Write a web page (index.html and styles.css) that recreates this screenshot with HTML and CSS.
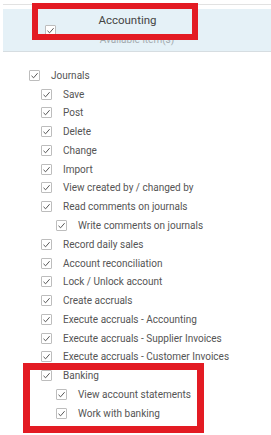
FILE: index.html
```html
<!DOCTYPE html>
<html lang="en">
<head>
    <meta charset="UTF-8">
    <meta name="viewport" content="width=device-width, initial-scale=1.0">
    <title>Rights - Accounting</title>
    <link rel="stylesheet" href="styles.css">
</head>
<body>
    <div class="top-line"></div>

    <!-- Module header -->
    <div class="panel">
        <div class="panel-title">Accounting</div>
        <div class="panel-row">
            <span class="cb checked"><svg viewBox="0 0 9 9"><polyline points="1.5,4.8 3.6,6.8 7.6,2.2"/></svg></span>
        </div>
        <div class="panel-sub">Available item(s)</div>
    </div>

    <!-- Rights tree -->
    <ul class="tree" id="tree"></ul>

    <!-- Annotation boxes -->
    <div class="mark mark-top"></div>
    <div class="mark mark-bottom"></div>

    <script>
        const rights = [
            [0, 'Journals'],
            [1, 'Save'],
            [1, 'Post'],
            [1, 'Delete'],
            [1, 'Change'],
            [1, 'Import'],
            [1, 'View created by / changed by'],
            [1, 'Read comments on journals'],
            [2, 'Write comments on journals'],
            [1, 'Record daily sales'],
            [1, 'Account reconciliation'],
            [1, 'Lock / Unlock account'],
            [1, 'Create accruals'],
            [1, 'Execute accruals - Accounting'],
            [1, 'Execute accruals - Supplier Invoices'],
            [1, 'Execute accruals - Customer Invoices'],
            [1, 'Banking'],
            [2, 'View account statements'],
            [2, 'Work with banking']
        ];

        const tree = document.getElementById('tree');
        rights.forEach(([level, label]) => {
            const li = document.createElement('li');
            li.className = 'row level-' + level;
            li.innerHTML =
                '<span class="cb checked"><svg viewBox="0 0 9 9"><polyline points="1.5,4.8 3.6,6.8 7.6,2.2"/></svg></span>' +
                '<span class="label"></span>';
            li.querySelector('.label').textContent = label;
            tree.appendChild(li);
        });
    </script>
</body>
</html>
```

FILE: styles.css
```css
body {
    font-family: Roboto, "Liberation Sans", Arial, sans-serif;
    margin: 0;
    color: #444;
    background: #fff;
    position: relative;
    width: 271px;
    height: 435px;
    overflow: hidden;
}
.top-line {
    margin: 4px 0 0 3px;
    border-top: 1px solid #e2e2e2;
}
.panel {
    margin: 4px 0 0 3px;
    height: 43px;
    box-sizing: border-box;
    background: #e5f1f7;
    border-bottom: 1px solid #d6dde1;
    padding-top: 4px;
}
.panel-title {
    font-size: 11.5px;
    line-height: 14px;
    text-align: center;
    padding-right: 19px;
    color: #444;
}
.panel-row {
    display: flex;
    padding-left: 42px;
    margin-top: -2px;
}
.panel-sub {
    font-size: 10px;
    line-height: 11px;
    text-align: center;
    color: #a4acb0;
    margin-top: -2px;
}
.cb {
    width: 11px;
    height: 11px;
    box-sizing: border-box;
    border: 1px solid #bdbdbd;
    border-radius: 1px;
    background: #fff;
    display: inline-flex;
    align-items: center;
    justify-content: center;
    flex: none;
}
.cb svg {
    width: 9px;
    height: 9px;
    fill: none;
    stroke: #444;
    stroke-width: 0.9;
}
.tree {
    list-style: none;
    margin: 14px 0 0 0;
    padding: 0;
}
.row {
    display: flex;
    align-items: center;
    height: 18.78px;
    font-size: 10px;
    color: #555;
}
.row .cb {
    margin-right: 11px;
}
.level-0 {
    padding-left: 29px;
}
.level-1 {
    padding-left: 41px;
}
.level-2 {
    padding-left: 56px;
}
.mark {
    position: absolute;
    border: 6px solid #e31b23;
    box-sizing: border-box;
}
.mark-top {
    left: 32px;
    top: 3px;
    width: 166px;
    height: 37px;
}
.mark-bottom {
    left: 23px;
    top: 363px;
    width: 181px;
    height: 70px;
    border-width: 7px;
}
```
